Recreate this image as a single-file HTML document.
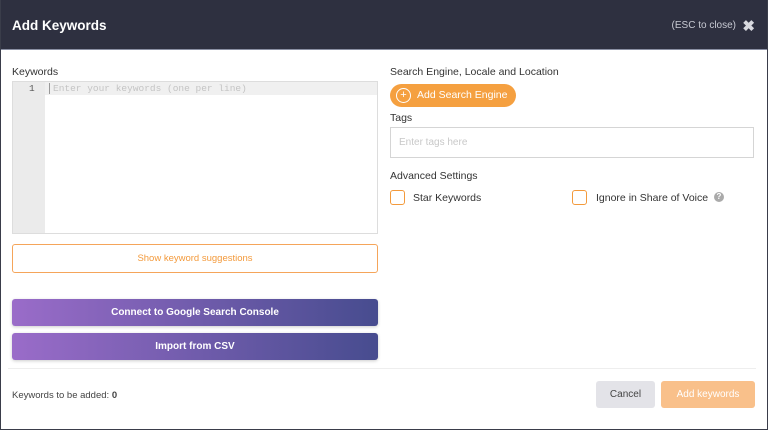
<!DOCTYPE html>
<html><head><style>
*{box-sizing:border-box;margin:0;padding:0}
body{width:768px;height:430px;overflow:hidden;font-family:"Liberation Sans",sans-serif;background:#fff;position:relative;font-size:11px;color:#333}
.frame{position:absolute;inset:0;border:1px solid #3a3d4a;border-top:none}
.hdr{position:absolute;left:0;top:0;width:768px;height:50px;background:#2e3040;border-bottom:1px solid #8a8fa3}
.hdr .t{position:absolute;left:12px;top:18px;color:#fff;font-weight:bold;font-size:13.5px}
.hdr .e{position:absolute;right:32px;top:20px;color:#c8cad3;font-size:10px}
.hdr .x{position:absolute;right:13px;top:17px;color:#d8d9df;font-size:15px;font-weight:bold}
.a{position:absolute}
.lbl{font-size:10.5px;color:#333}
.btnp{position:absolute;left:12px;width:366px;height:27px;border-radius:3px;background:linear-gradient(90deg,#9a6cc9,#474c8f);color:#fff;font-size:10px;font-weight:bold;text-align:center;line-height:27px;box-shadow:0 1px 3px rgba(0,0,0,.2)}
.cb{position:absolute;width:15px;height:15px;border:1.5px solid #f39a3c;border-radius:3px}
</style></head><body>
<div class="hdr"><div class="t">Add Keywords</div><div class="e">(ESC to close)</div><div class="x">✖</div></div>
<div class="a lbl" style="left:12px;top:66px">Keywords</div>
<div class="a" style="left:12px;top:81px;width:366px;height:153px;border:1px solid #ddd;background:#fff">
 <div class="a" style="left:0;top:0;width:32px;height:151px;background:#ebebeb"></div>
 <div class="a" style="left:32px;top:0;width:332px;height:13px;background:#f0f0f0"></div>
 <div class="a" style="left:16px;top:1px;font-family:'Liberation Mono',monospace;font-size:9.5px;color:#555">1</div>
 <div class="a" style="left:36px;top:1px;font-family:'Liberation Mono',monospace;font-size:9.5px;color:#c4c4c4;border-left:1px solid #999;padding-left:3px">Enter your keywords (one per line)</div>
</div>
<div class="a" style="left:12px;top:244px;width:366px;height:29px;border:1px solid #f5a55a;border-radius:3px;color:#f39a3c;font-size:9.5px;text-align:center;line-height:27px">Show keyword suggestions</div>
<div class="btnp" style="top:299px">Connect to Google Search Console</div>
<div class="btnp" style="top:333px">Import from CSV</div>
<div class="a" style="left:8px;top:368px;width:748px;height:1px;background:#eee"></div>
<div class="a" style="left:12px;top:390px;font-size:9.5px;color:#444">Keywords to be added: <b>0</b></div>
<div class="a" style="left:596px;top:381px;width:59px;height:27px;background:#e3e3e8;border-radius:3px;text-align:center;line-height:27px;font-size:10px;color:#444">Cancel</div>
<div class="a" style="left:661px;top:381px;width:94px;height:27px;background:#f9c08a;border-radius:3px;text-align:center;line-height:27px;font-size:10px;color:#fff">Add keywords</div>

<div class="a lbl" style="left:390px;top:66px">Search Engine, Locale and Location</div>
<div class="a" style="left:390px;top:84px;width:126px;height:23px;background:#f5a040;border-radius:12px;color:#fff;font-size:10.5px;line-height:23px;padding-left:27px">Add Search Engine</div>
<div class="a" style="left:396px;top:88px;width:15px;height:15px;border:1px solid #fff;border-radius:50%;color:#fff;font-size:11px;line-height:12px;text-align:center">+</div>
<div class="a lbl" style="left:390px;top:112px">Tags</div>
<div class="a" style="left:390px;top:127px;width:364px;height:31px;border:1px solid #d5d5d5;color:#c8c8c8;font-size:10px;line-height:29px;padding-left:8px">Enter tags here</div>
<div class="a lbl" style="left:390px;top:170px">Advanced Settings</div>
<div class="cb" style="left:390px;top:190px"></div>
<div class="a lbl" style="left:413px;top:192px">Star Keywords</div>
<div class="cb" style="left:572px;top:190px"></div>
<div class="a lbl" style="left:596px;top:192px">Ignore in Share of Voice</div>
<div class="a" style="left:714px;top:192px;width:10px;height:10px;border-radius:50%;background:#aaa;color:#fff;font-size:8px;line-height:10px;text-align:center;font-weight:bold">?</div>
<div class="frame"></div>
</body></html>
